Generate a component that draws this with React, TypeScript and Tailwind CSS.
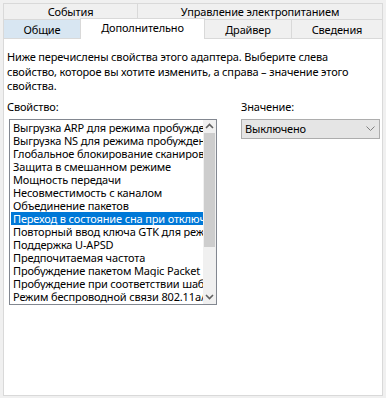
const items = [
  "Выгрузка ARP для режима пробуждения",
  "Выгрузка NS для режима пробуждения",
  "Глобальное блокирование сканирования",
  "Защита в смешанном режиме",
  "Мощность передачи",
  "Несовместимость с каналом",
  "Объединение пакетов",
  "Переход в состояние сна при отключении",
  "Повторный ввод ключа GTK для режима",
  "Поддержка U-APSD",
  "Предпочитаемая частота",
  "Пробуждение пакетом Magic Packet",
  "Пробуждение при соответствии шаблону",
  "Режим беспроводной связи 802.11a/b/g",
];

function Chevron({ up }: { up?: boolean }) {
  return (
    <svg width="9" height="6" viewBox="0 0 9 6" className="block">
      <path
        d={up ? "M1 5 L4.5 1.5 L8 5" : "M1 1 L4.5 4.5 L8 1"}
        fill="none"
        stroke="#606060"
        strokeWidth="1.6"
      />
    </svg>
  );
}

export default function App() {
  return (
    <div
      className="w-[386px] h-[398px] bg-[#f0f0f0] pt-[3px] px-[3px] text-[11px] tracking-[-0.15px] text-black"
      style={{ fontFamily: '"Noto Sans", "Open Sans", sans-serif' }}
    >
      {/* tab rows */}
      <div className="flex h-[16px]">
        <div className="w-[134px] border-t border-l border-[#d9d9d9] flex items-center justify-center leading-none">
          События
        </div>
        <div className="flex-1 border-t border-l border-r border-[#d9d9d9] flex items-center justify-center leading-none">
          Управление электропитанием
        </div>
      </div>
      <div className="flex h-[19px] items-end">
        <div className="w-[77px] h-[19px] bg-[#d8e6f2] border-t border-l border-[#d9d9d9] flex items-center justify-center leading-none">
          Общие
        </div>
        <div className="relative z-10 w-[125px] h-[21px] -mb-[1px] bg-white border-t border-l border-r border-[#d9d9d9] flex items-center justify-center leading-none pb-[3px]">
          Дополнительно
        </div>
        <div className="w-[86px] h-[19px] border-t border-[#d9d9d9] flex items-center justify-center leading-none">
          Драйвер
        </div>
        <div className="flex-1 h-[19px] border-t border-l border-r border-[#d9d9d9] flex items-center justify-center leading-none">
          Сведения
        </div>
      </div>

      <div className="h-[358px] bg-white border border-[#d9d9d9] pl-[3px] pr-[2px] pt-[11px]">
        <p className="leading-[14.5px] w-[345px]">
          Ниже перечислены свойства этого адаптера. Выберите слева свойство, которое вы хотите изменить, а справа – значение этого свойства.
        </p>
        <div className="flex mt-[6px]">
          <div className="w-[237px]">
            <div className="leading-[14px]">Свойство:</div>
            <div className="mt-[5px] ml-[2px] w-[208px] h-[186px] border border-[#828790] flex">
              <div className="flex-1 min-w-0 pl-[1px] pt-[1px]">
                {items.map((t, i) => (
                  <div
                    key={t}
                    className={
                      i === 7
                        ? "h-[13px] leading-[13px] whitespace-nowrap overflow-hidden pl-[2px] bg-[#0078d7] text-white"
                        : "h-[13px] leading-[13px] whitespace-nowrap overflow-hidden pl-[2px]"
                    }
                  >
                    {t}
                  </div>
                ))}
              </div>
              <div className="w-[13px] flex flex-col bg-[#f0f0f0]">
                <div className="h-[13px] flex items-center justify-center">
                  <Chevron up />
                </div>
                <div className="h-[114px] mx-[1px] bg-[#cdcdcd]" />
                <div className="flex-1" />
                <div className="h-[13px] flex items-center justify-center">
                  <Chevron />
                </div>
              </div>
            </div>
          </div>
          <div className="flex-1">
            <div className="leading-[14px]">Значение:</div>
            <div className="mt-[5px] w-[139px] h-[20px] bg-[#e5e5e5] border border-[#adadad] flex items-center justify-between pl-[3px] pr-[4px]">
              <span className="leading-none">Выключено</span>
              <svg width="9" height="5" viewBox="0 0 9 5">
                <path d="M0.5 0.5 L4.5 4.5 L8.5 0.5" fill="none" stroke="#808080" strokeWidth="1" />
              </svg>
            </div>
          </div>
        </div>
      </div>
    </div>
  );
}
